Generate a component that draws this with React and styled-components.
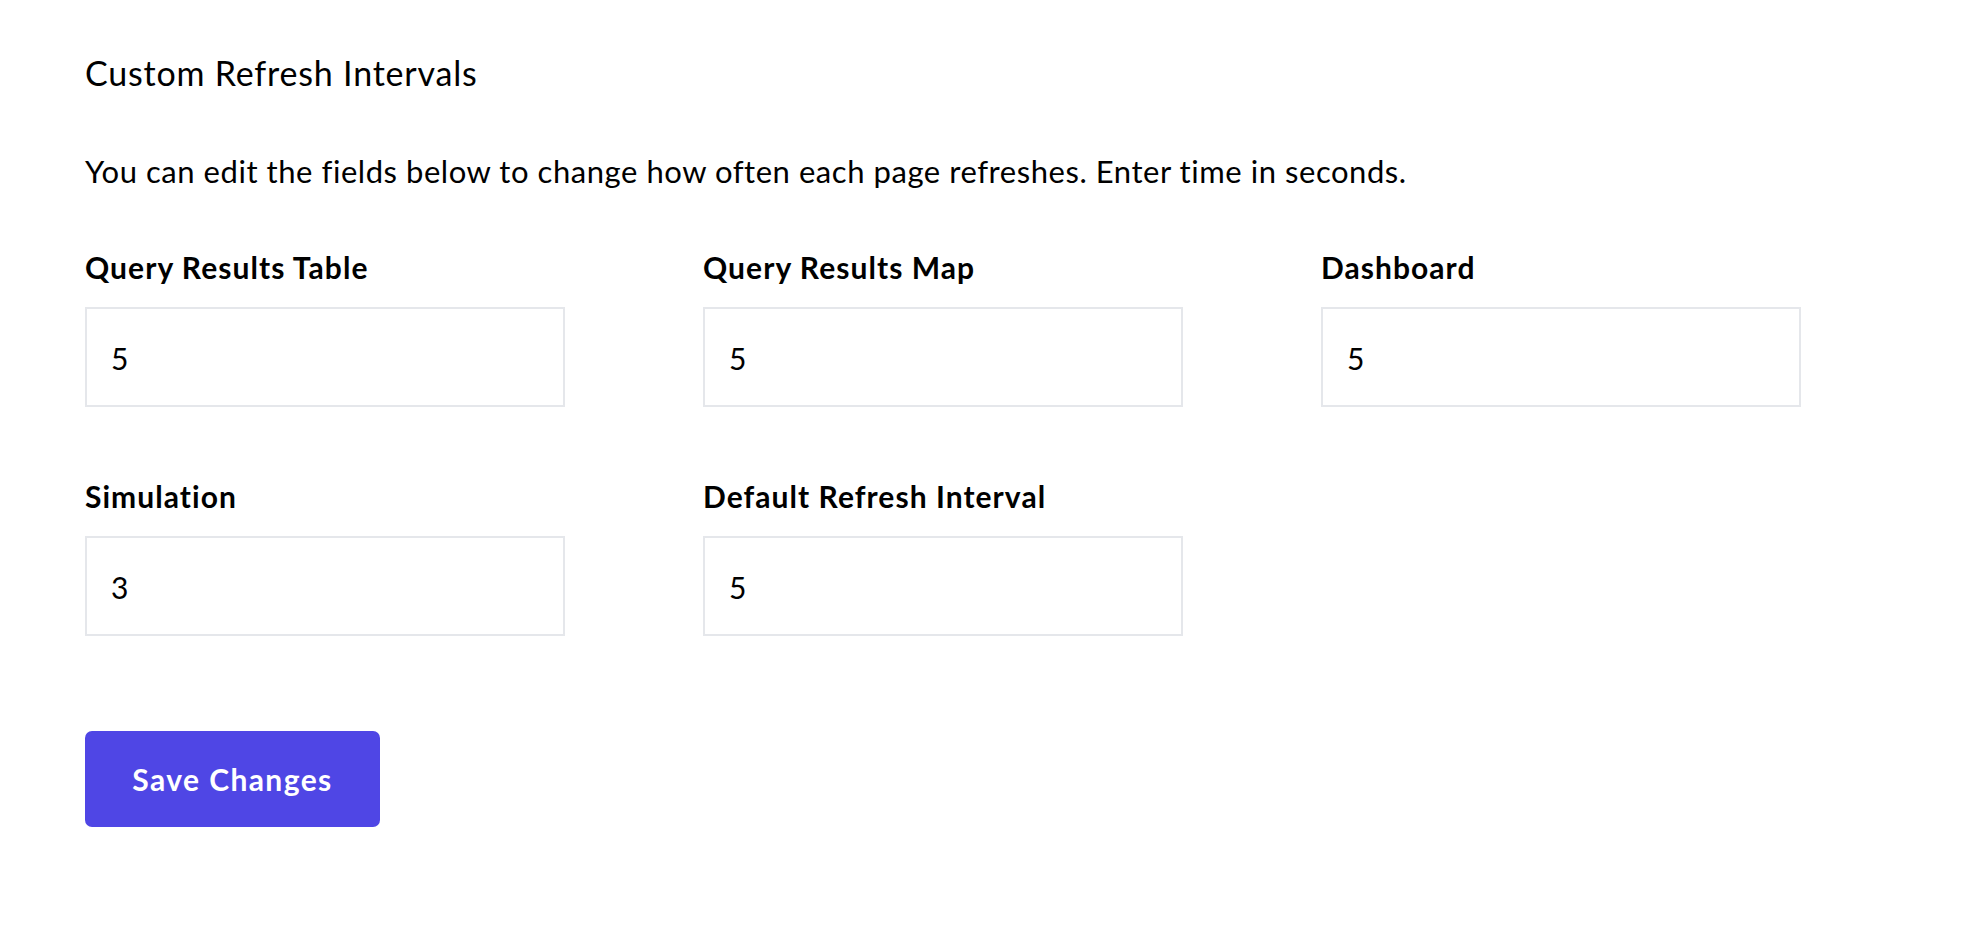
import styled, { createGlobalStyle } from "styled-components"

const GlobalStyle = createGlobalStyle`
    body {
        margin: 0;
        background: #ffffff;
        font-family: Lato, "Open Sans", "Noto Sans", sans-serif;
        color: #000;
    }
`

const Page = styled.div`
    padding: 52px 85px 80px;
`

const Title = styled.h2`
    margin: 0;
    font-size: 34px;
    line-height: 41px;
    font-weight: 400;
    letter-spacing: 0.8px;
`

const Description = styled.p`
    margin: 60px 0 0;
    font-size: 31px;
    line-height: 37px;
    letter-spacing: 0.55px;
`

const FieldGrid = styled.div`
    display: grid;
    grid-template-columns: repeat(3, 480px);
    column-gap: 138px;
    row-gap: 71px;
    margin-top: 59px;
`

const Field = styled.label`
    display: flex;
    flex-direction: column;
    gap: 22px;
`

const FieldLabel = styled.span`
    font-size: 30px;
    line-height: 36px;
    font-weight: 700;
    letter-spacing: 1.05px;
`

const Input = styled.input`
    box-sizing: border-box;
    width: 480px;
    height: 100px;
    padding: 2px 24px 0;
    border: 2px solid #e5e7eb;
    border-radius: 0;
    background: #fff;
    font-family: inherit;
    font-size: 30px;
    color: #000;
    outline: none;
`

const SaveButton = styled.button`
    margin-top: 95px;
    width: 295px;
    height: 96px;
    border: none;
    border-radius: 7px;
    background: #4f46e5;
    color: #fff;
    font-family: inherit;
    font-size: 30px;
    font-weight: 700;
    letter-spacing: 1.4px;
    cursor: pointer;
`

const fields = [
    { label: "Query Results Table", value: "5" },
    { label: "Query Results Map", value: "5" },
    { label: "Dashboard", value: "5" },
    { label: "Simulation", value: "3" },
    { label: "Default Refresh Interval", value: "5" },
]

export default function App() {
    return (
        <>
            <GlobalStyle />
            <Page>
                <Title>Custom Refresh Intervals</Title>
                <Description>
                    You can edit the fields below to change how often each page refreshes. Enter time in seconds.
                </Description>
                <FieldGrid>
                    {fields.map((field) => (
                        <Field key={field.label}>
                            <FieldLabel>{field.label}</FieldLabel>
                            <Input type="text" defaultValue={field.value} />
                        </Field>
                    ))}
                </FieldGrid>
                <SaveButton>Save Changes</SaveButton>
            </Page>
        </>
    )
}
